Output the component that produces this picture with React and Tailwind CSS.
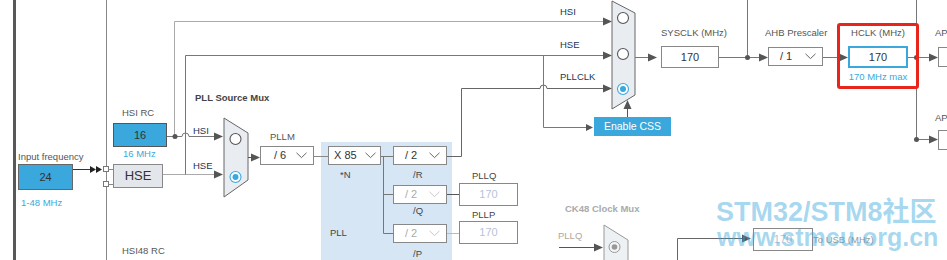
import React from "react";

function Arrow({ x, y, w = 9, h = 4, fill = "#555" }) {
  return <polygon points={`${x - w},${y - h} ${x},${y} ${x - w},${y + h}`} fill={fill} />;
}

function Radio({ cx, cy, on = false, gray = false }) {
  if (gray)
    return (
      <g>
        <circle cx={cx} cy={cy} r="5.5" fill="#f4f5f7" stroke="#999" />
        <circle cx={cx} cy={cy} r="2.8" fill="#999" />
      </g>
    );
  return (
    <g>
      <circle cx={cx} cy={cy} r="5.5" fill="#fff" stroke={on ? "#3aa8dc" : "#555"} strokeWidth="1.1" />
      {on && <circle cx={cx} cy={cy} r="3" fill="#3aa8dc" />}
    </g>
  );
}

function Chevron({ light }) {
  return (
    <svg width="11" height="7" viewBox="0 0 11 7" className="shrink-0">
      <path d="M0.5 0.8 L5.5 5.6 L10.5 0.8" fill="none" stroke={light ? "#c8c8c8" : "#666"} strokeWidth="1" />
    </svg>
  );
}

function Drop({ className, text, light }) {
  return (
    <div
      className={`flex items-center justify-between whitespace-nowrap border border-[#888] bg-white text-[11px] leading-none ${className} ${
        light ? "text-[#aaa]" : "text-[#333]"
      }`}
    >
      <span>{text}</span>
      <Chevron light={light} />
    </div>
  );
}

const lbl = "whitespace-nowrap text-[9.5px] leading-[12px]";
const val = "flex items-center justify-center bg-white text-[11px]";

export default function App() {
  const abs = `absolute ${lbl}`;
  return (
    <div className="relative h-[260px] w-[947px] overflow-hidden bg-white font-['Liberation_Sans','Noto_Sans_CJK_SC',Arial,sans-serif]">
      {/* PLL region */}
      <div className="absolute left-[321px] top-[142px] h-[130px] w-[131px] bg-[#d6e6f5]" />

      {/* wires */}
      <svg className="absolute inset-0" width="947" height="260">
        <rect x="13" y="0" width="3" height="260" fill="#585858" />
        <line x1="106.5" y1="0" x2="106.5" y2="260" stroke="#888" />

        <path d="M174.5 136 V21.5 H604" fill="none" stroke="#aaa" />
        <Arrow x={612} y={21.5} />
        <path d="M167 136.5 H182 A3.5 3.5 0 0 1 189 136.5 H214" fill="none" stroke="#777" />
        <circle cx="175" cy="136.5" r="2.5" fill="#555" />
        <Arrow x={223} y={136.5} />

        <path d="M163 174.5 H214" fill="none" stroke="#aaa" />
        <Arrow x={223} y={174.5} />
        <path d="M185.5 174.5 V55.5 H604" fill="none" stroke="#777" />
        <Arrow x={612} y={55.5} />

        <path d="M73 169.5 H90" stroke="#333" />
        <Arrow x={96} y={169.5} w={6} h={3.5} fill="#222" />
        <Arrow x={102} y={169.5} w={6} h={3.5} fill="#222" />
        <rect x="103.5" y="166.5" width="5" height="5" fill="#fff" stroke="#777" />
        <rect x="103.5" y="181.5" width="5" height="5" fill="#fff" stroke="#777" />
        <path d="M108.5 169.5 H113 M108.5 184.5 H113" stroke="#888" />

        <polygon points="224,118 248,133 248,180 224,197" fill="#e9edf1" stroke="#666" />
        <Radio cx={235.5} cy={139} />
        <Radio cx={235.5} cy={177} on />
        <path d="M248 157.5 H252" stroke="#555" />
        <Arrow x={260} y={157.5} />

        <path d="M314 156.5 H328" stroke="#888" />
        <path d="M381 156.5 H393 M383.5 156.5 V233.5 M383.5 194.5 H393 M383.5 233.5 H393" fill="none" stroke="#777" />
        <path d="M447 156.5 H461.5 V88.5 H540 A3.5 3.5 0 0 1 547 88.5 H604" fill="none" stroke="#666" />
        <Arrow x={612} y={88.5} />
        <path d="M447 194.5 H459" stroke="#555" />
        <path d="M447 233.5 H459" stroke="#bbb" />

        <path d="M543.5 55.5 V127.5 H586" fill="none" stroke="#777" />
        <Arrow x={593} y={127.5} w={7} h={3.5} />

        <polygon points="612,1 635,13 635,95 612,109" fill="#e9edf1" stroke="#666" />
        <Radio cx={623} cy={18} />
        <Radio cx={623} cy={54} />
        <Radio cx={623} cy={89} on />
        <path d="M627.5 117 V108" stroke="#555" />
        <polygon points="623.5,109 627.5,100 631.5,109" fill="#555" />

        <path d="M635 57.5 H648" stroke="#777" />
        <Arrow x={657} y={57.5} />
        <path d="M719 57.5 H759 M747.5 0 V57.5" fill="none" stroke="#777" />
        <circle cx="747.5" cy="57.5" r="2.5" fill="#555" />
        <Arrow x={768} y={57.5} />
        <path d="M823 57.5 H839" stroke="#777" />
        <Arrow x={848} y={57.5} />
        <path d="M908 57.5 H929 M916.5 0 V139.5 H929" fill="none" stroke="#777" />
        <circle cx="916.5" cy="57.5" r="2.5" fill="#555" />
        <circle cx="916.5" cy="139.5" r="2.5" fill="#555" />
        <Arrow x={938} y={57.5} />
        <Arrow x={938} y={139.5} />

        <path d="M559 247.5 H595" stroke="#555" />
        <Arrow x={603} y={247.5} />
        <polygon points="604,225 628,240 628,275 604,275" fill="#eef1f4" stroke="#999" />
        <Radio cx={614.5} cy={247} gray />
        <path d="M677.5 260 V238.5 H742" fill="none" stroke="#666" />
        <Arrow x={751} y={238.5} />
      </svg>

      {/* Input frequency node */}
      <div className="absolute left-[18px] top-[151px] flex flex-col items-start">
        <span className={`${lbl} text-[#555]`}>Input frequency</span>
        <div className="mt-px flex h-[26px] w-[55px] items-center justify-center border border-[#666] bg-[#3aa8dc] text-[11px] text-[#333]">24</div>
        <span className={`${lbl} ml-[3px] mt-[7px] text-[#3aa8dc]`}>1-48 MHz</span>
      </div>

      {/* HSI RC node */}
      <div className="absolute left-[113px] top-[107px] flex flex-col items-start">
        <span className={`${lbl} ml-[9px] text-[#555]`}>HSI RC</span>
        <div className="mt-[4px] flex h-[24px] w-[54px] items-center justify-center border border-[#555] bg-[#3aa8dc] text-[11px] text-[#333]">16</div>
        <span className={`${lbl} ml-[10px] mt-px text-[#3aa8dc]`}>16 MHz</span>
      </div>

      <div className="absolute left-[113px] top-[164px] flex h-[24px] w-[50px] items-center justify-center border border-[#888] bg-[#e3e6ea] text-[13px] text-[#333]">HSE</div>
      <div className={`${abs} left-[122px] top-[245px] text-[#555]`}>HSI48 RC</div>

      <div className={`${abs} left-[195px] top-[92px] font-bold text-[#444]`}>PLL Source Mux</div>
      <div className={`${abs} left-[193px] top-[125px] text-[#1d3557]`}>HSI</div>
      <div className={`${abs} left-[193px] top-[160px] text-[#1d3557]`}>HSE</div>

      {/* PLLM */}
      <div className="absolute left-[260px] top-[131px] flex flex-col items-start">
        <span className={`${lbl} ml-[10px] text-[#555]`}>PLLM</span>
        <Drop className="mt-[3px] h-[19px] w-[54px] pl-[13px] pr-[6px]" text="/ 6" />
      </div>

      {/* *N */}
      <div className="absolute left-[328px] top-[146px] flex flex-col items-start">
        <Drop className="h-[19px] w-[53px] pl-[5px] pr-[4px]" text="X 85" />
        <span className={`${lbl} ml-[12px] mt-[4px] text-[#444]`}>*N</span>
      </div>

      {/* dividers R Q P */}
      <div className="absolute left-[393px] top-[146px] flex w-[54px] flex-col items-start">
        <Drop className="h-[19px] w-[54px] pl-[11px] pr-[6px]" text="/ 2" />
        <span className={`${lbl} ml-[20px] mt-[4px] text-[#444]`}>/R</span>
        <Drop className="mt-[4px] h-[19px] w-[54px] pl-[11px] pr-[6px]" text="/ 2" light />
        <span className={`${lbl} ml-[20px] mt-px text-[#444]`}>/Q</span>
        <Drop className="mt-[7px] h-[19px] w-[54px] pl-[11px] pr-[6px]" text="/ 2" light />
        <span className={`${lbl} ml-[20px] mt-[5px] text-[#444]`}>/P</span>
      </div>
      <div className={`${abs} left-[330px] top-[227px] text-[#444]`}>PLL</div>

      {/* PLLQ / PLLP */}
      <div className="absolute left-[459px] top-[170px] flex flex-col items-start">
        <span className={`${lbl} ml-[13px] text-[#444]`}>PLLQ</span>
        <div className={`${val} mt-px h-[23px] w-[59px] border border-[#888] text-[#b4c3d9]`}>170</div>
        <span className={`${lbl} ml-[13px] mt-[3px] text-[#444]`}>PLLP</span>
        <div className={`${val} h-[23px] w-[59px] border border-[#888] text-[#b4c3d9]`}>170</div>
      </div>

      {/* SYSCLK mux labels */}
      <div className={`${abs} left-[560px] top-[6px] text-[#1d3557]`}>HSI</div>
      <div className={`${abs} left-[560px] top-[39px] text-[#1d3557]`}>HSE</div>
      <div className={`${abs} left-[560px] top-[71px] text-[#1d3557]`}>PLLCLK</div>

      <div className="absolute left-[594px] top-[117px] flex h-[19px] w-[77px] items-center justify-center bg-[#3aa8dc] text-[10.5px] text-white">Enable CSS</div>

      {/* SYSCLK */}
      <div className="absolute left-[661px] top-[27px] flex flex-col items-start">
        <span className={`${lbl} text-[#555]`}>SYSCLK (MHz)</span>
        <div className={`${val} mt-[7px] h-[22px] w-[58px] border border-[#888] text-[#333]`}>170</div>
      </div>

      {/* AHB */}
      <div className="absolute left-[765px] top-[27px] flex flex-col items-start">
        <span className={`${lbl} text-[#555]`}>AHB Prescaler</span>
        <Drop className="ml-[3px] mt-[8px] h-[19px] w-[55px] pl-[11px] pr-[6px]" text="/ 1" />
      </div>

      {/* HCLK highlighted */}
      <div className="absolute left-[837px] top-[23px] flex h-[66px] w-[82px] flex-col items-center rounded-[3px] border-[3px] border-[#e8251c] pt-px">
        <span className={`${lbl} text-[#555]`}>HCLK (MHz)</span>
        <div className={`${val} mt-[7px] h-[22px] w-[60px] border-2 border-[#3aa8dc] text-[#333]`}>170</div>
        <span className={`${lbl} mt-[3px] text-[#3aa8dc]`}>170 MHz max</span>
      </div>

      {/* APB stubs */}
      <div className="absolute left-[935px] top-[27px] flex flex-col items-start">
        <span className={`${lbl} text-[#555]`}>AP</span>
        <div className="ml-[3px] mt-[8px] h-[20px] w-[20px] border border-[#888] bg-white" />
      </div>
      <div className="absolute left-[935px] top-[112px] flex flex-col items-start">
        <span className={`${lbl} text-[#555]`}>AP</span>
        <div className="ml-[3px] mt-[6px] h-[20px] w-[20px] border border-[#888] bg-white" />
      </div>

      {/* CK48 */}
      <div className={`${abs} left-[565px] top-[203px] font-bold text-[#aaa]`}>CK48 Clock Mux</div>
      <div className={`${abs} left-[558px] top-[230px] text-[#b0a898]`}>PLLQ</div>
      <div className="absolute left-[753px] top-[228px] flex items-center">
        <div className={`${val} h-[23px] w-[60px] border border-[#888] text-[#b4c3d9]`}>170</div>
        <span className={`${lbl} text-[#999]`}>To USB (MHz)</span>
      </div>

      {/* watermark */}
      <div className="pointer-events-none absolute left-[716px] top-[196px] flex flex-col items-start font-bold text-[#3aa8dc]/45">
        <span className="whitespace-nowrap text-[27px] leading-[32px]">STM32/STM8社区</span>
        <span className="-mt-[5px] ml-px whitespace-nowrap text-[25px] leading-[28px]">www.stmcu.org.cn</span>
      </div>
    </div>
  );
}
